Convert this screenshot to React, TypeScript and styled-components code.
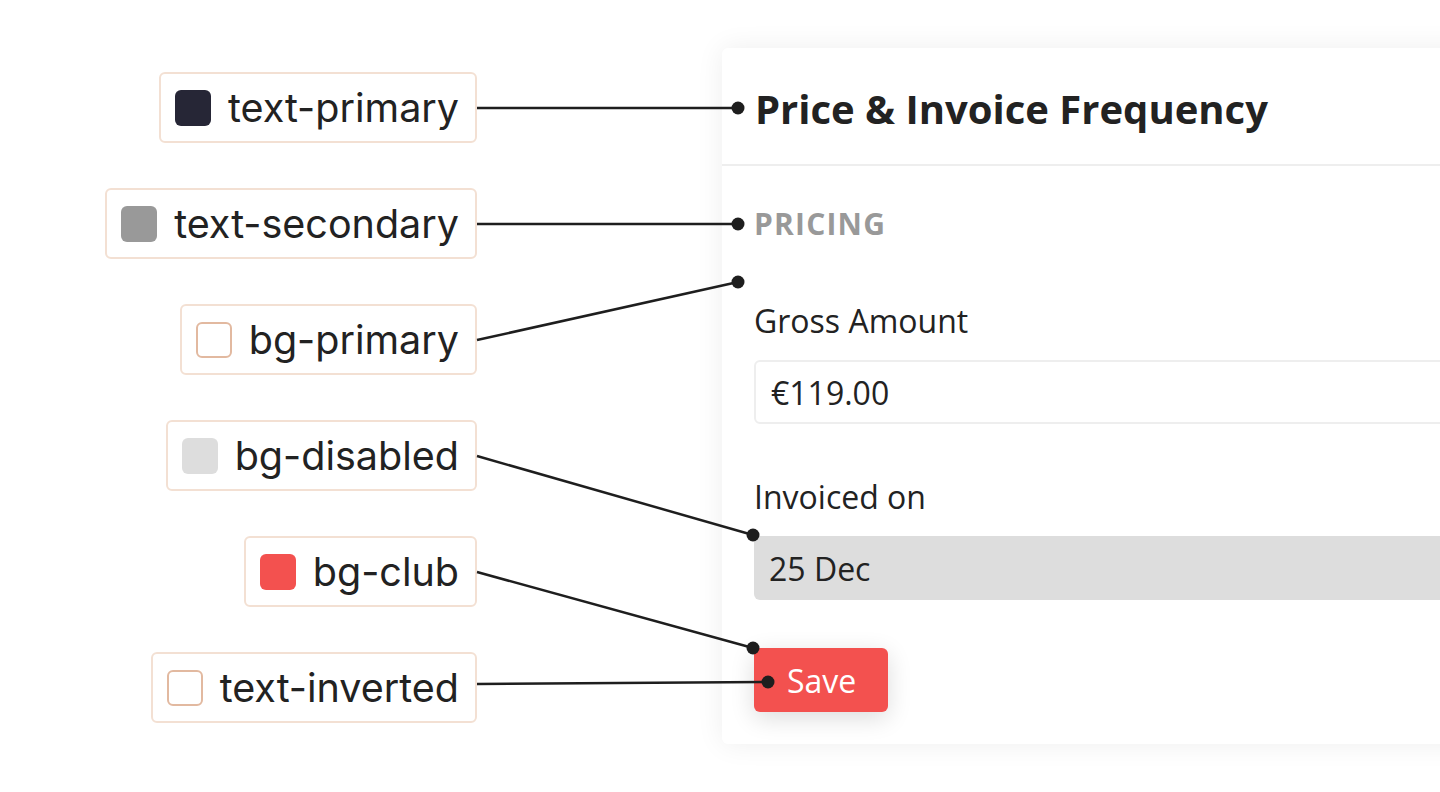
import React from "react";
import styled, { createGlobalStyle } from "styled-components";

const GlobalStyle = createGlobalStyle`
  html, body {
    margin: 0;
    padding: 0;
    background: #ffffff;
  }
  * {
    box-sizing: border-box;
  }
`;

const Page = styled.div`
  position: relative;
  width: 1440px;
  height: 792px;
  overflow: hidden;
  display: flex;
  align-items: flex-start;
  padding-top: 48px;
  background: #ffffff;
`;

const LegendColumn = styled.div`
  width: 477px;
  flex-shrink: 0;
  display: flex;
  flex-direction: column;
  align-items: flex-end;
  gap: 45px;
  padding-top: 24px;
`;

const LegendItem = styled.div`
  display: flex;
  align-items: center;
  gap: 17px;
  height: 71px;
  padding: 0 16px 0 14px;
  border: 2px solid #f3e0d3;
  border-radius: 6px;
  background: #ffffff;
  font-family: Inter, "Liberation Sans", sans-serif;
  font-size: 39.5px;
  color: #222222;
`;

const Swatch = styled.span<{ $color: string; $outlined?: boolean }>`
  width: 36px;
  height: 36px;
  border-radius: 6px;
  background: ${(p) => p.$color};
  border: ${(p) => (p.$outlined ? "2px solid #e2b9a0" : "none")};
  flex-shrink: 0;
`;

const Card = styled.div`
  margin-left: 245px;
  width: 760px;
  height: 696px;
  flex-shrink: 0;
  background: #ffffff;
  border-radius: 6px;
  box-shadow: 0 0 28px rgba(0, 0, 0, 0.07);
  font-family: "Open Sans", "Noto Sans", sans-serif;
  color: #222222;
`;

const CardHeader = styled.div`
  height: 118px;
  display: flex;
  align-items: center;
  padding: 4px 33px 0;
  border-bottom: 2px solid #eeeeee;
`;

const Title = styled.h2`
  margin: 0;
  font-size: 40px;
  font-weight: 700;
  color: #222222;
`;

const CardBody = styled.div`
  padding: 38px 0 0 32px;
  display: flex;
  flex-direction: column;
`;

const SectionTitle = styled.h3`
  margin: 0;
  font-size: 30px;
  font-weight: 700;
  line-height: 40px;
  color: #999999;
  letter-spacing: 1.2px;
`;

const FieldLabel = styled.label<{ $top: number }>`
  display: block;
  margin-top: ${(p) => p.$top}px;
  font-size: 32px;
  line-height: 40px;
  color: #222222;
`;

const Field = styled.div<{ $disabled?: boolean }>`
  margin-top: 19px;
  height: 64px;
  display: flex;
  align-items: center;
  padding-left: 15px;
  border-radius: 6px;
  font-size: 32px;
  color: #222222;
  background: ${(p) => (p.$disabled ? "#dddddd" : "#ffffff")};
  border: ${(p) => (p.$disabled ? "none" : "2px solid #eeeeee")};
`;

const SaveButton = styled.button`
  margin-top: 48px;
  width: 134px;
  height: 64px;
  padding: 0 0 0 33px;
  text-align: left;
  border: 0;
  border-radius: 6px;
  background: #f3514f;
  color: #ffffff;
  font-family: "Open Sans", "Noto Sans", sans-serif;
  font-size: 32px;
  box-shadow: 0 6px 24px rgba(0, 0, 0, 0.14);
`;

const Connectors = styled.svg`
  position: absolute;
  left: 0;
  top: 0;
  pointer-events: none;
`;

const legend = [
  { name: "text-primary", color: "#262636" },
  { name: "text-secondary", color: "#999999" },
  { name: "bg-primary", color: "#ffffff", outlined: true },
  { name: "bg-disabled", color: "#dddddd" },
  { name: "bg-club", color: "#f3514f" },
  { name: "text-inverted", color: "#ffffff", outlined: true },
];

const lines = [
  { x1: 477, y1: 108, x2: 738, y2: 108 },
  { x1: 477, y1: 224, x2: 738, y2: 224 },
  { x1: 477, y1: 340, x2: 738, y2: 282 },
  { x1: 477, y1: 456, x2: 753, y2: 535 },
  { x1: 477, y1: 572, x2: 753, y2: 648 },
  { x1: 477, y1: 684, x2: 768, y2: 682 },
];

export default function App() {
  return (
    <>
      <GlobalStyle />
      <Page>
        <LegendColumn>
          {legend.map((item) => (
            <LegendItem key={item.name}>
              <Swatch $color={item.color} $outlined={item.outlined} />
              {item.name}
            </LegendItem>
          ))}
        </LegendColumn>

        <Card>
          <CardHeader>
            <Title>Price &amp; Invoice Frequency</Title>
          </CardHeader>
          <CardBody>
            <SectionTitle>PRICING</SectionTitle>
            <FieldLabel $top={57}>Gross Amount</FieldLabel>
            <Field>€119.00</Field>
            <FieldLabel $top={53}>Invoiced on</FieldLabel>
            <Field $disabled>25 Dec</Field>
            <SaveButton>Save</SaveButton>
          </CardBody>
        </Card>

        <Connectors width="1440" height="792" viewBox="0 0 1440 792">
          {lines.map((l, i) => (
            <g key={i}>
              <line
                x1={l.x1}
                y1={l.y1}
                x2={l.x2}
                y2={l.y2}
                stroke="#1e1e1e"
                strokeWidth="2.5"
              />
              <circle cx={l.x2} cy={l.y2} r="6.5" fill="#1e1e1e" />
            </g>
          ))}
        </Connectors>
      </Page>
    </>
  );
}
